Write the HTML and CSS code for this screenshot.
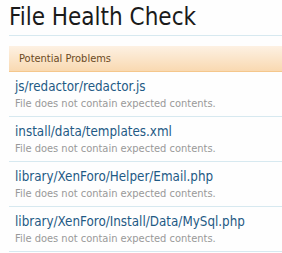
FILE: index.html
```html
<!DOCTYPE html>
<html lang="en">
<head>
    <meta charset="UTF-8">
    <title>File Health Check</title>
    <link rel="stylesheet" href="styles.css">
</head>
<body>
    <div class="page">
        <h1 class="page-title">File Health Check</h1>

        <div class="section-head">Potential Problems</div>

        <ol class="problem-list">
            <li class="problem">
                <a href="#" class="problem-file">js/redactor/redactor.js</a>
                <div class="problem-text">File does not contain expected contents.</div>
            </li>
            <li class="problem">
                <a href="#" class="problem-file">install/data/templates.xml</a>
                <div class="problem-text">File does not contain expected contents.</div>
            </li>
            <li class="problem">
                <a href="#" class="problem-file">library/XenForo/Helper/Email.php</a>
                <div class="problem-text">File does not contain expected contents.</div>
            </li>
            <li class="problem">
                <a href="#" class="problem-file">library/XenForo/Install/Data/MySql.php</a>
                <div class="problem-text">File does not contain expected contents.</div>
            </li>
        </ol>
    </div>
</body>
</html>
```

FILE: styles.css
```css
body {
    margin: 0;
    background: #fefefe;
    font-family: "DejaVu Sans Condensed", "DejaVu Sans", sans-serif;
}

.page {
    padding: 4px 0 0 9px;
}

.page-title {
    margin: 0;
    padding-bottom: 5px;
    font-size: 24px;
    font-weight: normal;
    line-height: 26px;
    color: #1a1a1a;
    border-bottom: 1px solid #d7e9f0;
}

.section-head {
    margin-top: 10px;
    height: 25px;
    line-height: 25px;
    padding-left: 10px;
    font-size: 11px;
    color: #6b4a1f;
    background: linear-gradient(180deg, #fdf1e3, #f9d9b1);
    border-bottom: 1px solid #f5c78c;
}

.problem-list {
    list-style: none;
    margin: 0;
    padding: 0;
}

.problem {
    padding: 7px 6px 6px;
    border-bottom: 1px solid #d7e9f0;
}

.problem-file {
    display: block;
    font-size: 13.3px;
    line-height: 16px;
    color: #1f5a85;
    text-decoration: none;
}

.problem-text {
    margin-top: 2px;
    font-size: 11px;
    line-height: 13px;
    color: #999999;
}
```
